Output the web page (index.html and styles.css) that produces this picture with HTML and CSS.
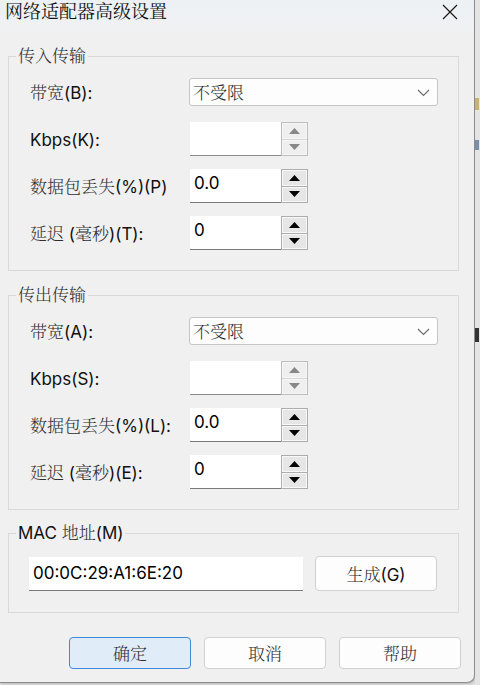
FILE: index.html
```html
<!DOCTYPE html>
<html lang="zh-CN">
<head>
<meta charset="utf-8">
<title>网络适配器高级设置</title>
<link rel="stylesheet" href="styles.css">
</head>
<body>
<div class="screen">
  <div class="window">
    <div class="titlebar">
      <span class="title">网络适配器高级设置</span>
      <span class="close">
        <svg width="16" height="16" viewBox="0 0 16 16"><path d="M1 1 L15 15 M15 1 L1 15" stroke="#1a1a1a" stroke-width="1.2" fill="none"/></svg>
      </span>
    </div>
    <div class="content">
      <section class="group">
        <div class="legend zh">传入传输</div>
        <div class="rows">
          <div class="row">
            <span class="label"><span class="zh">带宽</span>(B):</span>
            <div class="combo"><span class="zh">不受限</span><svg class="chev" width="13" height="8" viewBox="0 0 13 8"><path d="M1 1 L6.5 6.5 L12 1" stroke="#6a6a6a" stroke-width="1.1" fill="none"/></svg></div>
          </div>
          <div class="row">
            <span class="label">Kbps(K):</span>
            <div class="spinfield disabled">
              <div class="input"></div>
              <div class="spin">
                <div class="sbtn"><svg width="11" height="6" viewBox="0 0 11 6"><path d="M0 6 L5.5 0 L11 6 Z"/></svg></div>
                <div class="sbtn"><svg width="11" height="6" viewBox="0 0 11 6"><path d="M0 0 L11 0 L5.5 6 Z"/></svg></div>
              </div>
            </div>
          </div>
          <div class="row">
            <span class="label"><span class="zh">数据包丢失</span>(%)(P)</span>
            <div class="spinfield">
              <div class="input">0.0</div>
              <div class="spin">
                <div class="sbtn"><svg width="11" height="6" viewBox="0 0 11 6"><path d="M0 6 L5.5 0 L11 6 Z"/></svg></div>
                <div class="sbtn"><svg width="11" height="6" viewBox="0 0 11 6"><path d="M0 0 L11 0 L5.5 6 Z"/></svg></div>
              </div>
            </div>
          </div>
          <div class="row">
            <span class="label"><span class="zh">延迟</span> (<span class="zh">毫秒</span>)(T):</span>
            <div class="spinfield">
              <div class="input">0</div>
              <div class="spin">
                <div class="sbtn"><svg width="11" height="6" viewBox="0 0 11 6"><path d="M0 6 L5.5 0 L11 6 Z"/></svg></div>
                <div class="sbtn"><svg width="11" height="6" viewBox="0 0 11 6"><path d="M0 0 L11 0 L5.5 6 Z"/></svg></div>
              </div>
            </div>
          </div>
        </div>
      </section>

      <section class="group second">
        <div class="legend zh">传出传输</div>
        <div class="rows">
          <div class="row">
            <span class="label"><span class="zh">带宽</span>(A):</span>
            <div class="combo"><span class="zh">不受限</span><svg class="chev" width="13" height="8" viewBox="0 0 13 8"><path d="M1 1 L6.5 6.5 L12 1" stroke="#6a6a6a" stroke-width="1.1" fill="none"/></svg></div>
          </div>
          <div class="row">
            <span class="label">Kbps(S):</span>
            <div class="spinfield disabled">
              <div class="input"></div>
              <div class="spin">
                <div class="sbtn"><svg width="11" height="6" viewBox="0 0 11 6"><path d="M0 6 L5.5 0 L11 6 Z"/></svg></div>
                <div class="sbtn"><svg width="11" height="6" viewBox="0 0 11 6"><path d="M0 0 L11 0 L5.5 6 Z"/></svg></div>
              </div>
            </div>
          </div>
          <div class="row">
            <span class="label"><span class="zh">数据包丢失</span>(%)(L):</span>
            <div class="spinfield">
              <div class="input">0.0</div>
              <div class="spin">
                <div class="sbtn"><svg width="11" height="6" viewBox="0 0 11 6"><path d="M0 6 L5.5 0 L11 6 Z"/></svg></div>
                <div class="sbtn"><svg width="11" height="6" viewBox="0 0 11 6"><path d="M0 0 L11 0 L5.5 6 Z"/></svg></div>
              </div>
            </div>
          </div>
          <div class="row">
            <span class="label"><span class="zh">延迟</span> (<span class="zh">毫秒</span>)(E):</span>
            <div class="spinfield">
              <div class="input">0</div>
              <div class="spin">
                <div class="sbtn"><svg width="11" height="6" viewBox="0 0 11 6"><path d="M0 6 L5.5 0 L11 6 Z"/></svg></div>
                <div class="sbtn"><svg width="11" height="6" viewBox="0 0 11 6"><path d="M0 0 L11 0 L5.5 6 Z"/></svg></div>
              </div>
            </div>
          </div>
        </div>
      </section>

      <section class="group mac">
        <div class="legend dark">MAC <span class="zh">地址</span>(M)</div>
        <div class="macrow">
          <div class="macinput">00:0C:29:A1:6E:20</div>
          <div class="btn gen"><span class="zh">生成</span>(G)</div>
        </div>
      </section>

      <div class="buttons">
        <div class="btn primary zh">确定</div>
        <div class="btn zh">取消</div>
        <div class="btn zh">帮助</div>
      </div>
    </div>
  </div>
  <div class="backdrop">
    <span class="frag f1"></span>
    <span class="frag f2"></span>
    <span class="frag f3"></span>
  </div>
</div>
</body>
</html>
```

FILE: styles.css
```css
* { box-sizing: border-box; }

html, body {
  margin: 0;
  padding: 0;
  background: #dedede;
}

body {
  font-family: "Inter", "Noto Serif CJK SC", "Noto Sans CJK SC", sans-serif;
  font-size: 17px;
  color: #111;
}

.zh {
  font-weight: 300;
  color: #2e2e2e;
}

.screen {
  display: flex;
  width: 480px;
  height: 685px;
  overflow: hidden;
}

.window {
  width: 475px;
  height: 683px;
  flex: none;
  background: #f0f0f0;
  border-right: 1px solid #8c8c8c;
  border-bottom: 1px solid #8c8c8c;
  border-bottom-right-radius: 8px;
  display: flex;
  flex-direction: column;
  box-shadow: 1px 1px 2px rgba(0,0,0,0.15);
}

.titlebar {
  height: 33px;
  background: linear-gradient(#eef1f4, #eff1f3);
  display: flex;
  align-items: flex-start;
  justify-content: space-between;
  padding: 0 16px 0 5px;
}

.title {
  font-size: 18px;
  line-height: 24px;
  color: #111;
}

.close {
  display: flex;
  padding-top: 4px;
}

.content {
  display: flex;
  flex-direction: column;
}

.group {
  margin: 23px 15px 0 8px;
  border: 1px solid #d9d9d9;
  padding: 0 0 20px 0;
}

.group.second {
  margin-top: 24px;
}

.group.mac {
  margin-top: 23px;
  padding-bottom: 21px;
}

.legend {
  width: fit-content;
  margin: -13px 0 7px 7px;
  padding: 0 2px;
  background: #f0f0f0;
  line-height: 24px;
  font-size: 17px;
}

.legend.dark {
  color: #111;
  margin-bottom: 11px;
}

.rows {
  display: flex;
  flex-direction: column;
  gap: 13px;
}

.row {
  display: grid;
  grid-template-columns: 159px 249px;
  align-items: center;
  height: 34px;
  padding-left: 21px;
}

.label {
  white-space: nowrap;
  line-height: 24px;
  padding-top: 2px;
}

.combo {
  height: 28px;
  background: #fdfdfd;
  border: 1px solid #c6c6c6;
  border-radius: 3px;
  display: flex;
  align-items: center;
  justify-content: space-between;
  padding: 1px 7px 0 3px;
  line-height: 24px;
}

.spinfield {
  display: flex;
  width: 118px;
  height: 34px;
  margin-left: 1px;
}

.input {
  width: 91px;
  height: 34px;
  background: #fff;
  border-bottom: 1px solid #7a7a7a;
  padding: 0 4px;
  line-height: 28px;
  color: #000;
}

.spin {
  width: 27px;
  height: 34px;
  border: 1px solid #adadad;
  background: #adadad;
  display: flex;
  flex-direction: column;
  gap: 1px;
}

.sbtn {
  flex: 1;
  background: #e6e6e6;
  border: 1px solid #f8f8f8;
  display: flex;
  align-items: center;
  justify-content: center;
}

.sbtn svg { fill: #000; }

.disabled .spin {
  border-color: #bdbdbd;
  background: #d6d6d6;
}

.disabled .sbtn {
  background: #efefef;
  border-color: #f6f6f6;
}

.disabled .sbtn svg { fill: #888; }

.disabled .input {
  border-bottom-color: #8a8a8a;
}

.macrow {
  display: flex;
  align-items: center;
  gap: 12px;
  padding-left: 20px;
}

.macinput {
  width: 274px;
  height: 34px;
  background: #fff;
  border-bottom: 1px solid #7a7a7a;
  padding: 0 4px;
  line-height: 33px;
  color: #000;
}

.btn {
  width: 122px;
  height: 32px;
  background: #fdfdfd;
  border: 1px solid #d0d0d0;
  border-radius: 4px;
  display: flex;
  align-items: center;
  justify-content: center;
  line-height: 24px;
  padding-top: 2px;
}

.btn.gen {
  height: 35px;
}

.btn.primary {
  background: #e0ecf8;
  border-color: #3f8ad6;
}

.buttons {
  display: flex;
  justify-content: flex-end;
  gap: 13px;
  padding-right: 13px;
  margin-top: 24px;
}

.backdrop {
  flex: 1;
  background: #e4e4e4;
  display: flex;
  flex-direction: column;
}

.frag {
  display: block;
  width: 4px;
}

.f1 { height: 12px; margin-top: 98px; background: #c9b07a; }
.f2 { height: 10px; margin-top: 30px; background: #7b8fa8; }
.f3 { height: 14px; margin-top: 178px; background: #333; }
```
